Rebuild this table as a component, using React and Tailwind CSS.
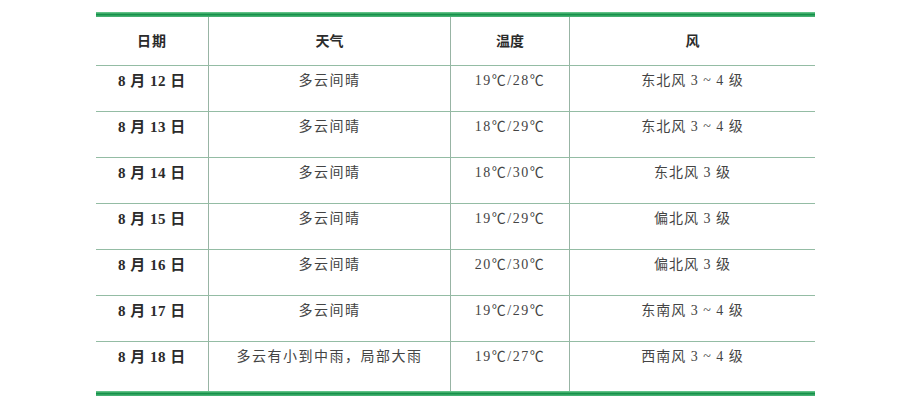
const rows = [
  ['8 月 12 日', '多云间晴', '19℃/28℃', '东北风 3 ~ 4 级'],
  ['8 月 13 日', '多云间晴', '18℃/29℃', '东北风 3 ~ 4 级'],
  ['8 月 14 日', '多云间晴', '18℃/30℃', '东北风 3 级'],
  ['8 月 15 日', '多云间晴', '19℃/29℃', '偏北风 3 级'],
  ['8 月 16 日', '多云间晴', '20℃/30℃', '偏北风 3 级'],
  ['8 月 17 日', '多云间晴', '19℃/29℃', '东南风 3 ~ 4 级'],
  ['8 月 18 日', '多云有小到中雨，局部大雨', '19℃/27℃', '西南风 3 ~ 4 级'],
]

const font = { fontFamily: '"Liberation Serif", "Noto Sans CJK SC", serif' }

function Bar() {
  return <div className="h-[5px] bg-linear-to-b from-[#6fcf97] via-[#13924a] to-[#4fb77c]" />
}

export default function App() {
  return (
    <div className="w-[911px] h-[407px] bg-white pt-[12px] pl-[96px]" style={font}>
      <div className="w-[719px] text-[#2b2b2b]">
        <Bar />
        {/* 表头 */}
        <div className="flex h-[49px] border-b border-[#94bca4] font-bold text-[14px]">
          <div className="w-[112px] flex items-center justify-center tracking-[1px]">日期</div>
          <div className="w-[242px] border-l border-[#98b4a4] flex items-center justify-center">天气</div>
          <div className="w-[119px] border-l border-[#98b4a4] flex items-center justify-center">温度</div>
          <div className="flex-1 border-l border-[#98b4a4] flex items-center justify-center">风</div>
        </div>
        {rows.map((r, i) => (
          <div
            key={i}
            className={
              i === rows.length - 1
                ? 'flex h-[49px] text-[14px] leading-[16px]'
                : 'flex h-[46px] border-b border-[#94bca4] text-[14px] leading-[16px]'
            }
          >
            <div className="w-[112px] pt-[7px] text-center font-bold text-[15px] tracking-[0.5px]">{r[0]}</div>
            <div className="w-[242px] border-l border-[#98b4a4] pt-[7px] text-center tracking-[1.5px] text-[#444]">{r[1]}</div>
            <div className="w-[119px] border-l border-[#98b4a4] pt-[7px] text-center text-[#444] tracking-[1.5px]">{r[2]}</div>
            <div className="flex-1 border-l border-[#98b4a4] pt-[7px] text-center text-[#444] tracking-[1px]">{r[3]}</div>
          </div>
        ))}
        <Bar />
      </div>
    </div>
  )
}
